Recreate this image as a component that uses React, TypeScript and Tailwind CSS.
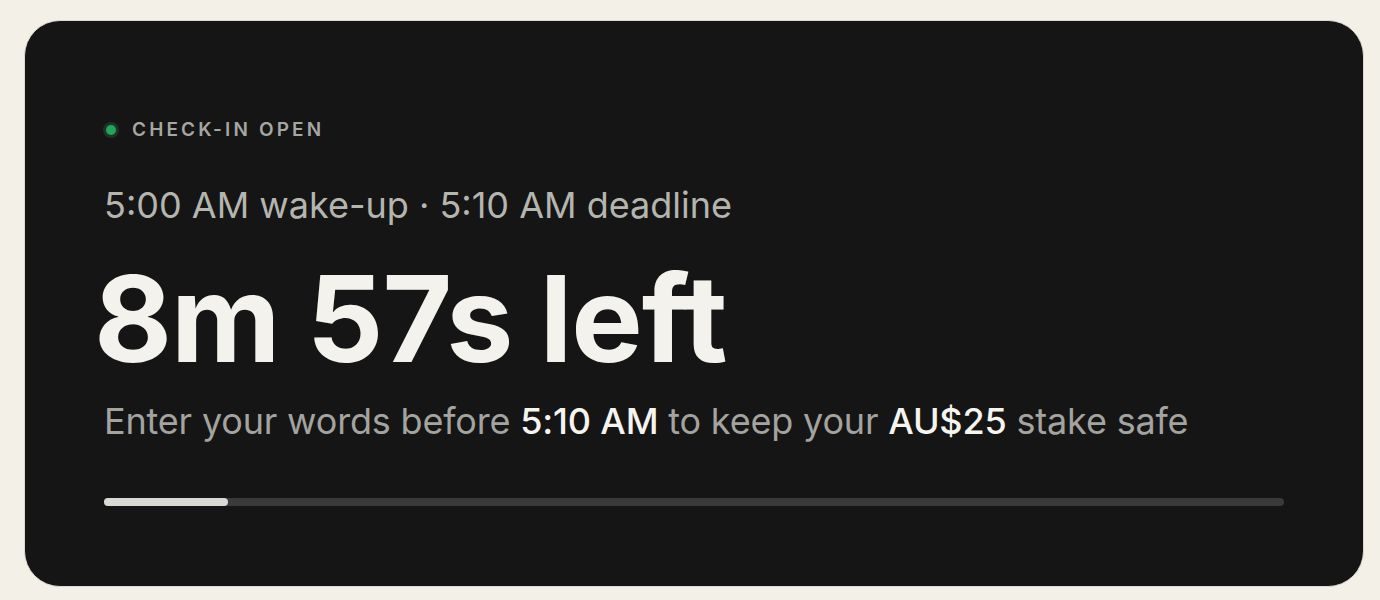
import React from "react";

export default function App() {
  return (
    <div className="min-h-[600px] w-full bg-[#f3f0e8] pl-[24px] pr-[16px] pt-[20px] pb-[14px] font-['Inter',sans-serif]">
      <div className="rounded-[36px] border border-[#dcd9d1] bg-[#151515] px-[79px] pt-[97px] pb-[80px]">
        <div className="flex h-[24px] items-center gap-[13px]">
          <span className="-ml-[1px] flex h-[16px] w-[16px] items-center justify-center rounded-full bg-[#1c3426]">
            <span className="h-[10px] w-[10px] rounded-full bg-[#22a55b]" />
          </span>
          <span className="text-[19px] font-semibold uppercase leading-[24px] tracking-[0.165em] text-[#a6a6a2]">Check-in open</span>
        </div>
        <div className="mt-[41px] text-[36px] leading-[44px] text-[#b5b5b0]">
          5:00 AM wake-up · 5:10 AM deadline
        </div>
        <div className="-ml-[10px] mt-[32px] text-[120px] font-bold leading-[120px] tracking-[-0.009em] text-[#f4f2ec]">
          8m 57s left
        </div>
        <div className="mt-[20px] text-[36px] leading-[44px] tracking-[-0.005em] text-[#a3a39f]">
          Enter your words before <span className="font-medium text-[#f6f4ef]">5:10 AM</span> to keep your{" "}
          <span className="font-medium text-[#f6f4ef]">AU$25</span> stake safe
        </div>
        <div className="mt-[55px] h-[8px] w-full rounded-full bg-[#3a3a3a]">
          <div className="h-[8px] rounded-full bg-[#d9d9d5]" style={{ width: "10.5%" }} />
        </div>
      </div>
    </div>
  );
}
